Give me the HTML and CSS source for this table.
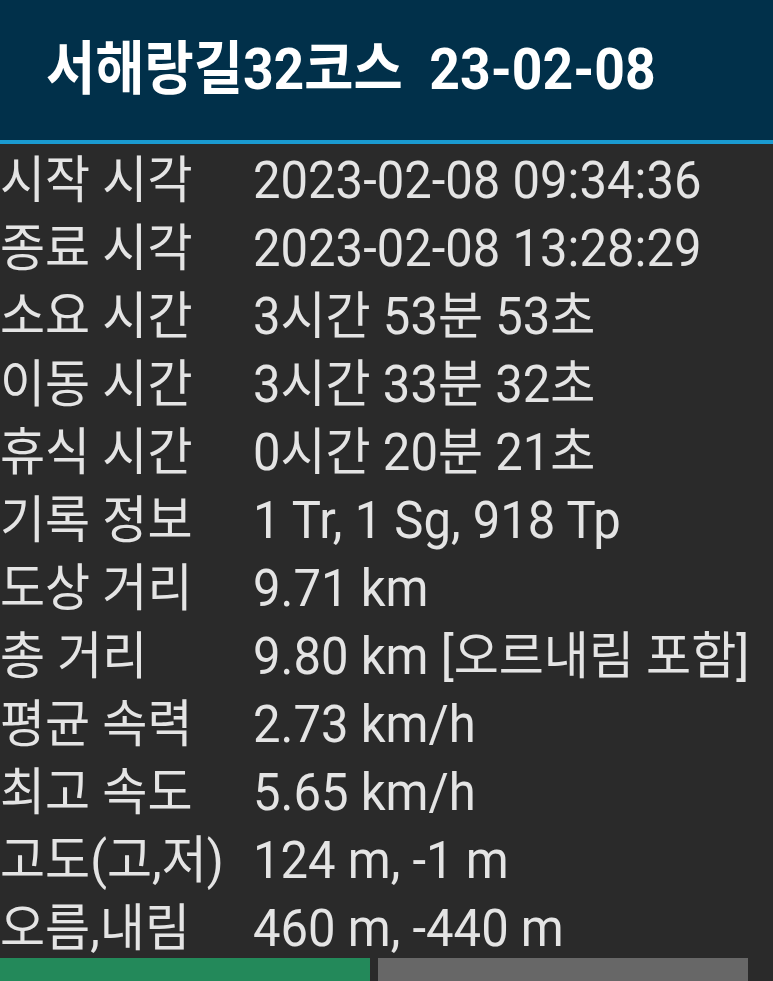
FILE: index.html
```html
<!DOCTYPE html>
<html lang="ko">
<head>
<meta charset="utf-8">
<link rel="stylesheet" href="styles.css">
</head>
<body>
<header class="topbar"><h1 class="title">서해랑길32코스  23-02-08</h1></header>
<main class="stats">
  <div class="row"><span class="label">시작 시각</span><span class="value">2023-02-08 09:34:36</span></div>
  <div class="row"><span class="label">종료 시각</span><span class="value">2023-02-08 13:28:29</span></div>
  <div class="row"><span class="label">소요 시간</span><span class="value">3시간 53분 53초</span></div>
  <div class="row"><span class="label">이동 시간</span><span class="value">3시간 33분 32초</span></div>
  <div class="row"><span class="label">휴식 시간</span><span class="value">0시간 20분 21초</span></div>
  <div class="row"><span class="label">기록 정보</span><span class="value">1 Tr, 1 Sg, 918 Tp</span></div>
  <div class="row"><span class="label">도상 거리</span><span class="value">9.71 km</span></div>
  <div class="row"><span class="label">총 거리</span><span class="value">9.80 km [오르내림 포함]</span></div>
  <div class="row"><span class="label">평균 속력</span><span class="value">2.73 km/h</span></div>
  <div class="row"><span class="label">최고 속도</span><span class="value">5.65 km/h</span></div>
  <div class="row"><span class="label">고도(고,저)</span><span class="value">124 m, -1 m</span></div>
  <div class="row"><span class="label">오름,내림</span><span class="value">460 m, -440 m</span></div>
</main>
<footer class="actions">
  <button class="btn btn-green"></button>
  <button class="btn btn-gray"></button>
</footer>
</body>
</html>
```
FILE: styles.css
```css
html, body {
  margin: 0;
  padding: 0;
  background: #2a2a2a;
  overflow: hidden;
}
body {
  width: 773px;
  height: 981px;
  font-family: Roboto, "Noto Sans CJK KR", sans-serif;
}
.topbar {
  height: 140px;
  background: #01304a;
  border-bottom: 4px solid #1a9bd1;
  display: flex;
  align-items: center;
  padding-left: 46px;
  box-sizing: content-box;
}
.title {
  margin: 0;
  color: #ffffff;
  font-size: 53.5px;
  font-weight: 700;
  white-space: pre;
  transform: scaleY(1.08);
  transform-origin: left center;
  line-height: 1;
}
.stats {
  height: 812px;
  padding-top: 2px;
  display: grid;
  grid-auto-rows: 68px;
  align-content: start;
}
.row {
  display: grid;
  grid-template-columns: 253px 1fr;
  align-items: center;
  color: #e4e4e4;
  font-size: 49px;
  line-height: 1;
  transform: scaleY(1.05);
}
.label, .value {
  white-space: nowrap;
}
.actions {
  display: flex;
  gap: 8px;
}
.btn {
  width: 370px;
  height: 60px;
  border: 0;
  padding: 0;
  margin: 0;
}
.btn-green { background: #23895a; }
.btn-gray { background: #676767; }
```
